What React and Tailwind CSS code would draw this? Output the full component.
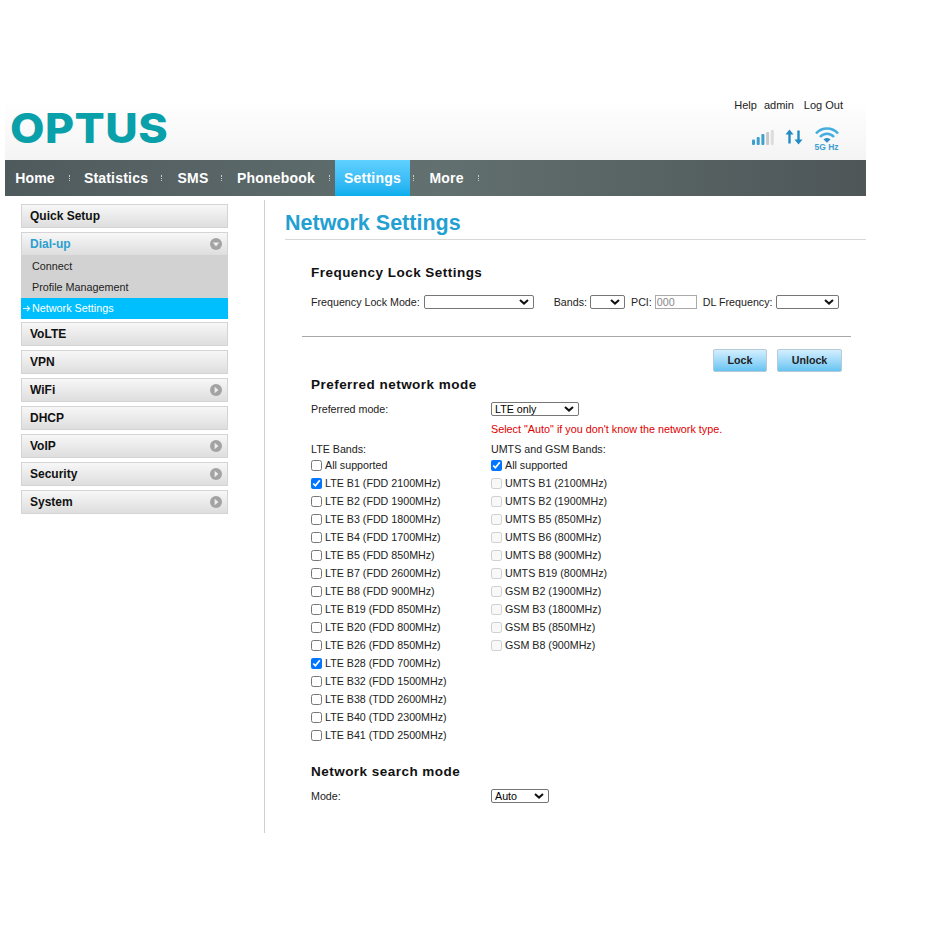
const navItems = [
  { label: 'Home', width: 'w-[60px]', sep: 'w-[10px]' },
  { label: 'Statistics', width: 'w-[82px]', sep: 'w-[11px]' },
  { label: 'SMS', width: 'w-[50px]', sep: 'w-[9px]' },
  { label: 'Phonebook', width: 'w-[98px]', sep: 'w-[10px]' },
  { label: 'Settings', width: 'w-[75px]', sep: 'w-[9px]', active: true },
  { label: 'More', width: 'w-[55px]', sep: 'w-[10px]' },
];

const lteBands = [
  ['LTE B1 (FDD 2100MHz)', true],
  ['LTE B2 (FDD 1900MHz)'],
  ['LTE B3 (FDD 1800MHz)'],
  ['LTE B4 (FDD 1700MHz)'],
  ['LTE B5 (FDD 850MHz)'],
  ['LTE B7 (FDD 2600MHz)'],
  ['LTE B8 (FDD 900MHz)'],
  ['LTE B19 (FDD 850MHz)'],
  ['LTE B20 (FDD 800MHz)'],
  ['LTE B26 (FDD 850MHz)'],
  ['LTE B28 (FDD 700MHz)', true],
  ['LTE B32 (FDD 1500MHz)'],
  ['LTE B38 (TDD 2600MHz)'],
  ['LTE B40 (TDD 2300MHz)'],
  ['LTE B41 (TDD 2500MHz)'],
];

const umtsBands = [
  'UMTS B1 (2100MHz)',
  'UMTS B2 (1900MHz)',
  'UMTS B5 (850MHz)',
  'UMTS B6 (800MHz)',
  'UMTS B8 (900MHz)',
  'UMTS B19 (800MHz)',
  'GSM B2 (1900MHz)',
  'GSM B3 (1800MHz)',
  'GSM B5 (850MHz)',
  'GSM B8 (900MHz)',
];

function SideButton({ label, arrow, open, active }) {
  return (
    <div className={`flex items-center justify-between pl-[8px] pr-[5px] border border-[#d4d4d4] bg-gradient-to-b from-[#f7f7f7] to-[#dedede] text-[12px] font-bold ${active ? 'h-[23px] text-[#2b9fd0] border-b-0' : 'h-[24px] text-[#111]'}`}>
      <span>{label}</span>
      {arrow && (
        <svg width="12" height="12" viewBox="0 0 12 12">
          <circle cx="6" cy="6" r="6" fill="#a3a3a3" />
          {open ? <path d="M2.8 4.6h6.4L6 8.4z" fill="#eee" /> : <path d="M4.6 2.8v6.4L8.4 6z" fill="#eee" />}
        </svg>
      )}
    </div>
  );
}

function Check({ label, checked, disabled }) {
  return (
    <label className="h-[18px] flex items-center">
      <input type="checkbox" defaultChecked={checked} disabled={disabled} className="m-0 w-[11px] h-[11px]" />
      <span className="ml-[3px]">{label}</span>
    </label>
  );
}

function Select({ className, value }) {
  return (
    <span className={`relative inline-block h-[14px] ${className}`}>
      <select defaultValue={value} className="block w-full h-full appearance-none border border-[#767676] rounded-[2px] bg-white text-[10.7px] leading-[12px] text-black pl-[3px]">
        <option value={value}>{value}</option>
      </select>
      <svg width="10" height="6" viewBox="0 0 10 6" className="absolute right-[5px] top-[4px] pointer-events-none">
        <path d="M1 1l4 3.6L9 1" fill="none" stroke="#111" strokeWidth="2" />
      </svg>
    </span>
  );
}

function SectionTitle({ children, className }) {
  return <h2 className={`text-[13.5px] font-bold text-[#111] tracking-[0.47px] leading-[16px] ${className}`}>{children}</h2>;
}

export default function App() {
  return (
    <div className="w-[929px] h-[929px] bg-white pt-[100px] pl-[5px] text-[10.7px] text-[#222] font-['Liberation_Sans',Arial,sans-serif] overflow-hidden">
      <div className="w-[861px]">
        <header className="h-[60px] relative bg-gradient-to-b from-white to-[#f4f4f4]">
          <div className="flex justify-end pr-[23px] text-[#222] text-[11px] leading-[10px]">
            <span>Help</span>
            <span className="ml-[7px]">admin</span>
            <span className="ml-[10px]">Log Out</span>
          </div>
          <div className="absolute left-[5px] top-[3px] origin-left scale-x-[1.09] text-[#0aa0a9] text-[41px] leading-[50px] font-extrabold tracking-[0.4px] font-['Inter',sans-serif]">OPTUS</div>
          <div className="absolute left-[747px] top-[27px] flex items-start">
            <svg width="22" height="15" viewBox="0 0 22 15" className="mt-[3px]">
              <rect x="0" y="9.5" width="3" height="5.5" rx="1" fill="#3f9fd0" />
              <rect x="4.7" y="7" width="3" height="8" rx="1" fill="#3f9fd0" />
              <rect x="9.4" y="4" width="3" height="11" rx="1" fill="#3f9fd0" />
              <rect x="14.1" y="2" width="3" height="13" rx="1" fill="#c9c9c9" />
              <rect x="18.8" y="0" width="3" height="15" rx="1" fill="#dcdcdc" />
            </svg>
            <svg width="18" height="16" viewBox="0 0 18 16" className="ml-[11px] mt-[2px]">
              <path d="M0.5 5.5L4.5 0.5l4 5z" fill="#1f8cc4" />
              <path d="M4.5 4v10.5" stroke="#1f8cc4" strokeWidth="2.4" />
              <path d="M9.5 10.5l4 5 4-5z" fill="#1f8cc4" />
              <path d="M13.5 1.5V12" stroke="#1f8cc4" strokeWidth="2.4" />
            </svg>
            <div className="ml-[11px] flex flex-col items-center w-[25px]">
              <svg width="24" height="16" viewBox="0 0 24 16">
                <path d="M1 6.5c6-6.6 16-6.6 22 0" fill="none" stroke="#45aee0" strokeWidth="2.6" />
                <path d="M5 10c4-4.4 10-4.4 14 0" fill="none" stroke="#45aee0" strokeWidth="2.6" />
                <path d="M8.5 12.4c2-2 5-2 7 0l-3.5 3.4z" fill="#2f90c8" />
              </svg>
              <span className="text-[8.5px] leading-[9px] font-bold text-[#3f9fd0]">5G Hz</span>
            </div>
          </div>
        </header>

        <nav className="h-[36px] flex bg-gradient-to-r from-[#4f5a5d] via-[#62706f] to-[#4e5658] text-white text-[14px] font-bold tracking-[0.2px]">
          {navItems.map((item) => (
            <div key={item.label} className="flex items-center">
              <div className={`h-[36px] flex items-center justify-center ${item.width} ${item.active ? 'bg-gradient-to-b from-[#5fd0ff] to-[#08aeee]' : ''}`}>
                {item.label}
              </div>
              <div className={`${item.sep} flex justify-center pr-[2px]`}>
                <span className="w-[1px] h-[6px] border-l border-dotted border-[#c8cfcf]" />
              </div>
            </div>
          ))}
        </nav>

        <div className="flex">
          <aside className="w-[223px] pl-[16px] pt-[8px] flex flex-col gap-[4px] shrink-0">
            <SideButton label="Quick Setup" />
            <div>
              <SideButton label="Dial-up" arrow open active />
              <div className="bg-[#d2d2d2] text-[10.8px] text-[#222]">
                <div className="h-[22px] flex items-center pl-[11px] pt-[1px]">Connect</div>
                <div className="h-[21px] flex items-center pl-[11px]">Profile Management</div>
                <div className="h-[21px] flex items-center bg-[#00bfff] text-white relative pl-[11px]">
                  <svg width="8" height="7" viewBox="0 0 8 7" className="absolute left-[2px] top-[7px]">
                    <path d="M0 3.5h6M4 1l2.6 2.5L4 6" fill="none" stroke="#d6f4ff" strokeWidth="1.1" />
                  </svg>
                  Network Settings
                </div>
              </div>
            </div>
            <div className="-mt-[1px]"><SideButton label="VoLTE" /></div>
            <SideButton label="VPN" />
            <SideButton label="WiFi" arrow />
            <SideButton label="DHCP" />
            <SideButton label="VoIP" arrow />
            <SideButton label="Security" arrow />
            <SideButton label="System" arrow />
          </aside>

          <main className="ml-[36px] mt-[4px] pt-[4px] w-[602px] h-[633px] border-l border-[#d0d0d0] pl-[20px]">
            <h1 className="h-[36px] border-b border-[#d8d8d8] text-[21.5px] leading-[38px] font-bold text-[#239fd2]">Network Settings</h1>

            <div className="pl-[26px] pt-[25px]">
              <SectionTitle>Frequency Lock Settings</SectionTitle>
              <div className="flex items-center h-[16px] mt-[13px]">
                <span>Frequency Lock Mode:</span>
                <Select className="w-[110px] ml-[4px]" value="" />
                <span className="ml-[20px]">Bands:</span>
                <Select className="w-[35px] ml-[3px]" value="" />
                <span className="ml-[6px]">PCI:</span>
                <input readOnly placeholder="000" className="w-[42px] h-[14px] ml-[3px] border border-[#aaa] px-[1px] text-[10.7px] placeholder:text-[#888]" />
                <span className="ml-[6px]">DL Frequency:</span>
                <Select className="w-[63px] ml-[3px]" value="" />
              </div>
            </div>

            <div className="ml-[17px] mt-[26px] w-[549px] border-t border-[#a8a8a8]" />

            <div className="flex justify-end gap-[10px] w-[557px] mt-[12px]">
              <button className="w-[54px] h-[23px] border border-[#b5c9d6] rounded-[2px] bg-gradient-to-b from-[#d3efff] to-[#65c4f2] font-bold text-[#222]">Lock</button>
              <button className="w-[65px] h-[23px] border border-[#b5c9d6] rounded-[2px] bg-gradient-to-b from-[#d3efff] to-[#65c4f2] font-bold text-[#222]">Unlock</button>
            </div>

            <div className="pl-[26px]">
              <SectionTitle className="mt-[5px]">Preferred network mode</SectionTitle>
              <div className="grid grid-cols-[180px_1fr] mt-[9px]">
                <div className="leading-[14px]">Preferred mode:</div>
                <Select className="w-[88px]" value="LTE only" />
                <div className="col-start-2 mt-[6px] leading-[14px] text-[#e00000] text-[10.8px]">Select "Auto" if you don't know the network type.</div>
              </div>
              <div className="grid grid-cols-[180px_1fr] mt-[6px]">
                <div>
                  <div className="h-[14px] leading-[14px]">LTE Bands:</div>
                  <Check label="All supported" />
                  {lteBands.map(([label, checked]) => (
                    <Check key={label} label={label} checked={checked} />
                  ))}
                </div>
                <div>
                  <div className="h-[14px] leading-[14px]">UMTS and GSM Bands:</div>
                  <Check label="All supported" checked />
                  {umtsBands.map((label) => (
                    <Check key={label} label={label} disabled />
                  ))}
                </div>
              </div>
              <SectionTitle className="mt-[20px]">Network search mode</SectionTitle>
              <div className="grid grid-cols-[180px_1fr] mt-[9px]">
                <div className="leading-[14px]">Mode:</div>
                <Select className="w-[58px]" value="Auto" />
              </div>
            </div>
          </main>
        </div>
      </div>
    </div>
  );
}
